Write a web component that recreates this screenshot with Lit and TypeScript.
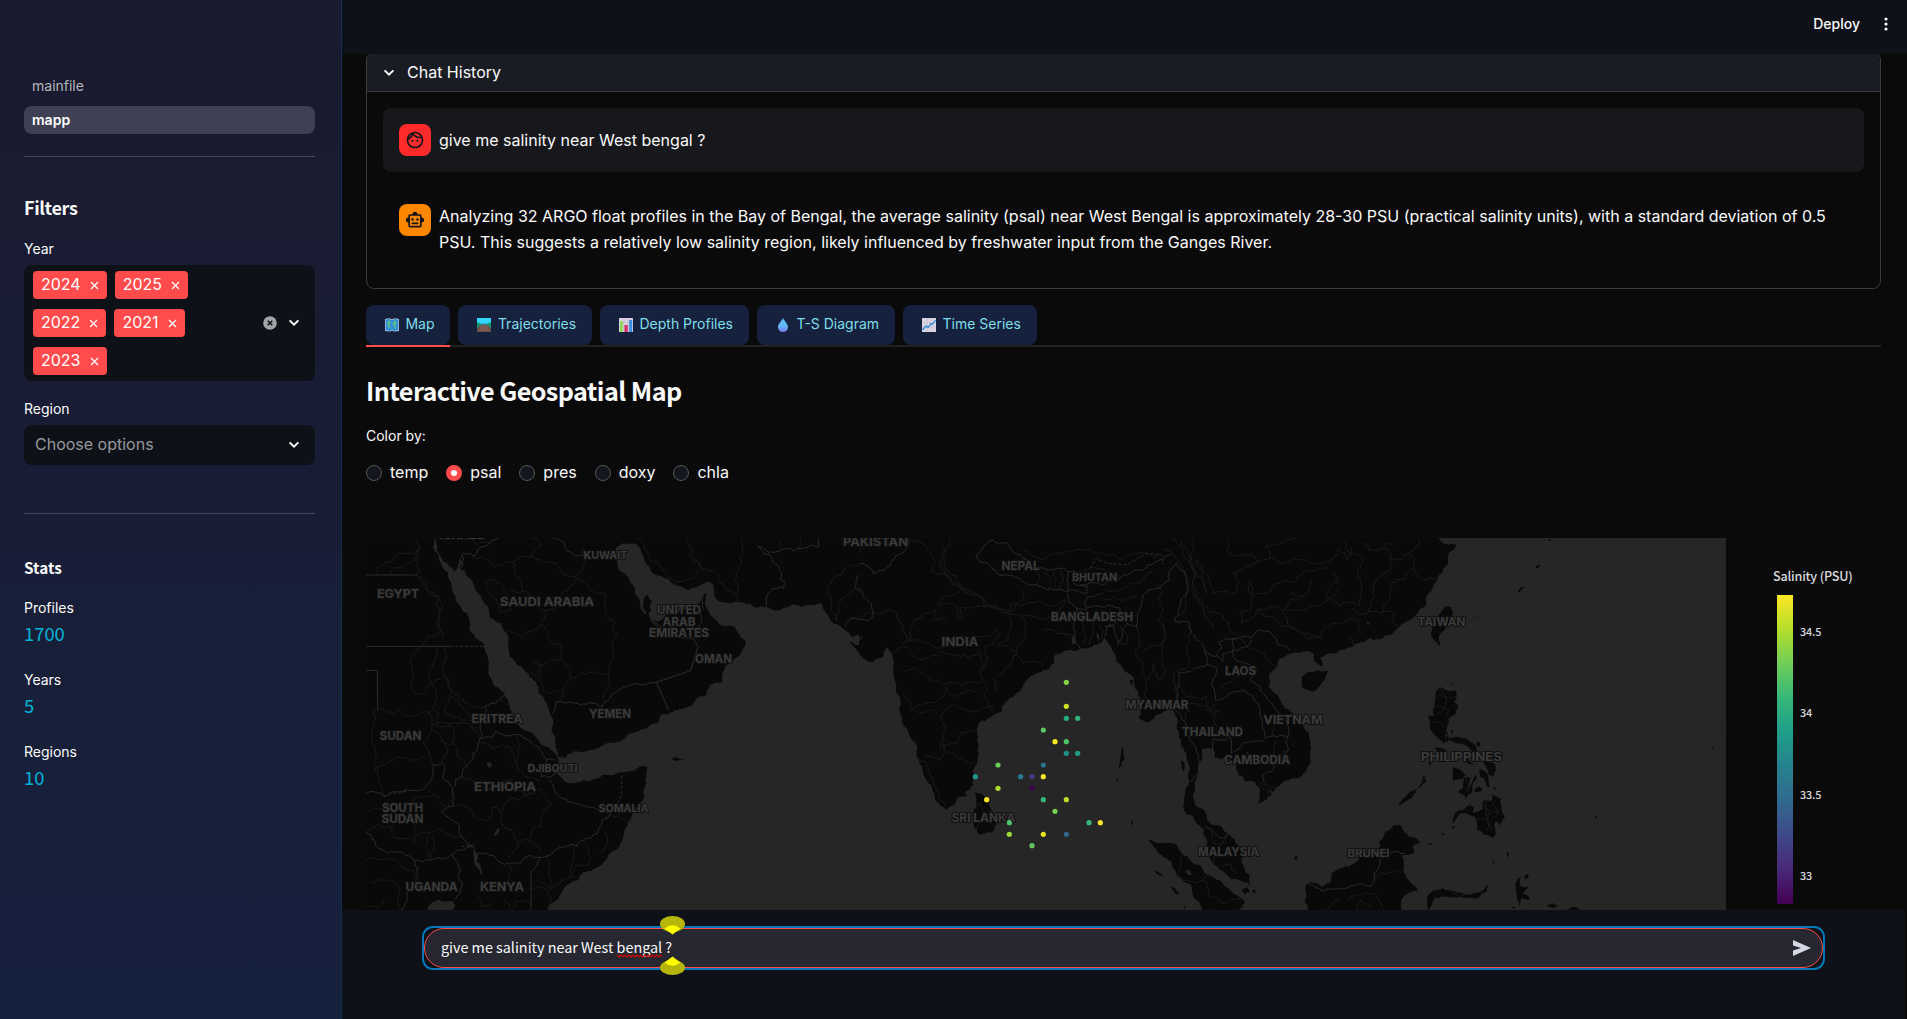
import { LitElement, html, svg, css } from "lit";
import { customElement } from "lit/decorators.js";

type Pt = [number, number];

const parse = (s: string): Pt[] =>
  s.trim().split(/\s+/).map((p) => p.split(",").map(Number) as Pt);

/** Adds deterministic fractal detail to a polyline so that it reads as a coast or border. */
function rough(s: string, amp: number, closed: boolean, min = 7): string {
  const pts = parse(s);
  let seed = Math.abs(pts[0][0] * 31 + pts[0][1] * 17 + pts.length * 101) + 7;
  const rnd = () => {
    seed = (seed * 16807) % 2147483647;
    return seed / 2147483647 - 0.5;
  };
  const out: string[] = [];
  const split = (a: Pt, b: Pt) => {
    const dx = b[0] - a[0];
    const dy = b[1] - a[1];
    const len = Math.hypot(dx, dy);
    if (len < min || len > 260) {
      out.push(`${b[0].toFixed(1)},${b[1].toFixed(1)}`);
      return;
    }
    const k = rnd() * amp;
    const m: Pt = [(a[0] + b[0]) / 2 - dy * k, (a[1] + b[1]) / 2 + dx * k];
    split(a, m);
    split(m, b);
  };
  out.push(`${pts[0][0]},${pts[0][1]}`);
  for (let i = 1; i < pts.length; i++) split(pts[i - 1], pts[i]);
  return "M" + out.join("L") + (closed ? "Z" : "");
}

interface Sheet {
  transform: string;
  land: string[];
  water: string[];
  country: string[];
  province: string[];
  straight: string[];
  dashed: string[];
}

const SHEETS: Sheet[] = [
  {
    transform: "translate(-1 -8) scale(.33333)",
    land: [
      "3,20 205,20 207,60 225,95 248,125 258,155 265,190 290,235 315,272 312,300 330,322 355,340 362,365 372,395 375,440 385,465 420,492 435,530 445,565 470,595 510,618 545,650 575,676 580,700 572,728 600,755 625,760 655,750 690,748 740,735 790,725 830,708 848,712 845,760 835,810 800,860 775,915 740,965 700,1010 640,1050 590,1090 545,1142 3,1142",
      "204,20 214,60 235,95 268,130 278,112 290,76 284,118 300,122 330,175 352,210 370,232 374,262 410,280 430,320 435,380 455,405 490,430 520,490 545,520 560,560 570,620 580,682 600,685 640,665 700,655 750,638 800,610 850,590 882,577 885,558 930,540 980,528 990,510 1025,495 1035,465 1072,458 1072,430 1085,405 1110,385 1142,334 1110,293 1060,280 1035,255 1028,240 1025,188 985,225 930,252 880,275 856,270 850,250 838,252 825,220 812,195 805,165 770,125 752,85 755,50 775,40 810,40 835,80 860,127 890,140 930,165 970,180 1000,168 1025,155 1045,163 1052,205 1110,215 1200,232 1290,225 1370,220 1380,245 1395,268 1420,285 1440,300 1460,320 1502,318 1502,20",
      "836,205 848,194 860,212 858,245 846,252 834,235",
      "920,686 935,682 960,687 935,694",
      "1453,335 1475,345 1502,338 1502,390 1480,365",
    ],
    water: [
      "186,1140 200,1118 225,1110 262,1112 270,1125 262,1140",
      "325,962 335,970 336,995 352,1030 345,1034 328,1000",
      "364,700 375,696 382,705 372,714",
      "388,915 400,893 404,900 392,920",
      "1456,332 1478,322 1502,318 1502,330 1478,336",
    ],
    country: [
      "420,492 382,520 360,528 362,555 345,580 345,625 338,655 320,690 295,715 293,742 272,750 262,780 264,828 228,845 250,860 280,880 300,930 325,950 330,968 365,970 400,995 440,1000 492,975 525,982 560,972 590,952 635,950 738,848",
      "345,625 382,622 392,605 430,618 470,618 500,640 530,665 545,690 570,690",
      "545,690 525,720 528,740 556,742 575,728",
      "556,750 565,775 605,808 650,825 705,845 738,848",
      "3,905 30,935 70,968 110,965 150,992 200,990 245,985 265,972 300,958 325,948",
      "262,975 285,1020 292,1065 270,1110",
      "150,992 158,1040 130,1080 108,1140",
      "290,72 282,120",
      "292,72 330,78 355,50 400,24",
      "560,24 625,75 660,80 655,60",
      "575,515 600,518 690,520 712,532 728,512 745,490 775,470 870,458",
      "575,515 562,550",
      "858,270 880,300",
      "1010,200 1010,270 1000,290",
      "1178,48 1210,68 1290,62 1362,50 1362,24",
      "1178,48 1242,110 1245,150 1260,155 1255,175 1210,190 1202,232",
      "1502,100 1490,125 1470,170 1500,215",
      "1440,290 1455,265 1502,262",
      "3,790 50,792 60,800 130,780 155,782 200,750 205,735 205,705 230,700",
      "232,700 235,745 262,770",
      "525,985 500,1022",
    ],
    province: [
      "35,135 50,105 80,95 120,70 160,60", "80,135 90,112 150,92 160,55",
      "155,30 160,70 155,135 185,180 215,195 225,240 215,275 230,300 190,320 170,345",
      "160,140 190,190 222,200 228,245 220,290 236,320", "210,350 205,400 200,460 180,490 155,490 140,460 135,400 165,350",
      "240,352 235,400 250,450 265,490 300,520 330,530 360,528", "200,465 215,500 205,535 190,548",
      "20,542 75,545 180,545 200,575 195,610 175,640 195,680 205,705", "20,542 22,600 30,660 28,700 40,745 50,790",
      "28,725 60,705 85,690 120,685 150,690 185,682", "205,590 230,575 255,580 270,610 262,640 240,640 220,610 200,600",
      "240,640 232,700", "200,465 240,440 260,480 250,520 235,540 280,560 310,570 340,570",
      "210,540 215,580 245,590 300,580 340,600", "255,500 290,530 320,560 320,590 340,625",
      "262,640 280,680 310,710", "345,640 380,655 440,655 450,690 440,710", "458,622 460,660 455,700 480,740 525,750",
      "293,745 340,760 400,765 440,750", "265,828 310,830 325,860 370,870 380,830 410,850 405,880 440,900 460,935",
      "410,850 430,810 480,790 540,790 560,825 540,840 530,890 500,900 495,935 460,935 430,980", "495,935 530,972",
      "440,770 480,800 510,790", "330,85 380,100 440,95 470,150 465,190 430,180",
      "290,24 330,40 380,40", "440,95 520,90 580,110 630,140 655,110 680,85",
      "360,155 390,150 430,200 440,240 405,245 395,210 370,190 360,155", "470,185 515,225 540,240 530,280 500,305 470,325 430,300",
      "630,145 670,170 720,190 720,245 748,275 740,350 730,440 720,520",
      "630,145 590,190 570,235 540,245", "530,285 550,325 580,340 585,385 620,445 730,438",
      "500,400 530,405 585,390", "520,410 525,440 535,480 590,485 615,445", "590,485 588,515 575,515",
      "495,410 510,395 530,410 515,440 498,425",
      "812,24 850,75 880,100 900,125 940,155 990,140 1010,110 975,50 965,24",
      "985,90 1010,115 1045,120 1060,155 1090,180 1120,215", "1130,24 1125,80 1112,130 1110,200", 
      "1500,100 1450,110 1410,140 1390,190 1395,240 1420,275", "1480,170 1440,200 1415,270",
      "3,990 50,990 100,1000 140,1020 150,1050", "3,900 80,890 90,925 130,925 155,940 150,870 120,840 150,800 210,795 250,830 262,790",
      "185,920 180,950 190,990", "155,915 290,918", "200,920 200,985", "3,850 50,835 100,850",
      "545,975 550,1030 560,1075 590,1050 625,1040 620,1000 625,955", "655,930 680,985 670,1005 630,1010", "720,905 725,945 700,970",
      "720,862 760,860 800,870", "500,1075 545,1078 555,1140", "515,1050 560,1080", "430,1000 435,1050 410,1085",
      "20,1060 60,1050 105,1080 100,1140", "3,1130 40,1135 60,1110", "340,1095 350,1130 380,1120", "420,1110 440,1138 475,1110 500,1115",
      "500,24 530,50 500,85", "1240,35 1250,60", "1305,24 1303,60",
    ],
    straight: [
      "3,135 155,135", "3,349 265,349", "870,458 977,422 999,350 985,325 930,322 860,270", "874,458 912,541", "498,1140 498,1022", "3,421 37,421 38,540",
    ],
    dashed: ["270,349 360,349", "770,738 770,795 758,822", "55,799 130,782", "290,950 325,945"],
  },
  {
    transform: "translate(494 -8) scale(.33333)",
    land: [
      "-2,20 -2,328 15,314 -2,333 -2,376 30,395 70,380 82,350 95,368 100,430 110,490 120,550 145,605 170,680 190,730 215,770 225,810 260,840 282,825 290,805 322,798 315,785 340,765 338,720 355,680 350,600 360,575 385,565 425,545 425,530 480,485 530,430 560,420 582,400 585,375 620,362 680,355 720,340 735,318 755,360 770,395 800,425 822,450 835,485 850,515 835,565 870,575 905,550 935,535 950,590 965,650 980,690 985,730 975,790 972,840 1000,860 1030,895 1042,930 1050,985 1080,1020 1110,1045 1172,1068 1168,1035 1145,1000 1145,960 1110,915 1085,890 1055,885 1035,845 1005,825 1000,790 1010,745 1025,690 1028,655 1060,655 1062,683 1095,685 1130,705 1135,735 1160,755 1185,755 1200,775 1195,822 1225,800 1260,765 1300,745 1340,725 1350,670 1335,600 1300,555 1260,510 1225,470 1228,430 1260,385 1300,368 1345,362 1362,372 1365,395 1385,410 1380,380 1400,372 1440,360 1480,345 1502,335 1502,20",
      "345,785 385,810 400,850 410,880 390,908 360,915 345,895 338,850 350,810",
      "1325,440 1350,425 1403,422 1395,450 1355,485 1325,470",
      "865,930 895,940 945,942 970,975 1000,1000 1045,1035 1085,1055 1105,1075 1155,1115 1135,1142 1030,1142 1000,1100 985,1060 945,1020 935,995 890,960",
      "1502,988 1465,1015 1415,1030 1410,1060 1385,1070 1350,1055 1335,1075 1335,1115 1345,1142 1502,1142",
      "786,652 791,658 784,700 776,720", "768,750 773,740 773,755", "883,1020 905,1032 907,1038 888,1028",
      "932,1070 945,1075 957,1095 945,1090", "812,868 820,880 816,886", "1303,980 1312,978 1312,990 1304,990",
      "1145,1080 1160,1072 1168,1085 1155,1095", "1175,1080 1188,1082 1182,1090",
      "808,452 820,450 814,468", "780,400 800,410 808,432 795,425", "962,690 974,700 968,725", "974,1125 977,1130 972,1140",
    ],
    water: [
      "640,345 636,315 642,318 645,340", "716,335 710,300 718,322", "1220,775 1250,795 1240,798",
      "975,1022 990,1020 998,1035 985,1035", "1155,665 1165,668 1166,675",
    ],
    country: [
      "-2,100 40,130 75,118 100,90 140,55 145,24", "-2,175 10,200 35,235 35,265 -2,270",
      "355,90 350,75 375,45 400,30 440,40 480,75 500,90", "355,90 400,120 440,135 500,160 560,180 620,185 622,150 625,125 560,118 520,105 490,85",
      "622,185 680,190 682,170 640,160", "625,125 660,130", "660,165 730,165 760,145 830,120 890,95 930,75",
      "622,190 625,215 650,235 680,240 682,200 700,200", "650,235 640,290 645,320 660,355", "682,230 730,232 780,235 765,280 740,290 738,318",
      "735,290 760,285 775,345 785,300 800,280 830,290 832,250 865,180 930,150 930,120 950,100 975,125 985,180 960,225 945,275",
      "945,275 990,280 1010,330 1035,365 1070,378 1085,355 1075,335 1115,325 1130,330",
      "1035,365 1040,405 1010,412 955,430 950,480 945,540 985,600",
      "985,620 1010,660 1015,720 990,755",
      "1040,405 1072,415 1065,510 1100,500 1150,480 1195,520 1200,560 1215,620 1250,620 1285,620",
      "1070,378 1088,395 1090,370 1135,360 1160,350 1175,330",
      "1115,325 1120,380 1160,400 1190,420 1170,450 1200,470 1225,510 1250,540 1280,580 1285,620 1285,660 1245,690 1240,720 1205,735 1215,760",
      "1115,330 1170,322 1200,300 1240,318 1255,345 1290,362",
      "1060,680 1060,625 1110,620 1115,670 1150,640 1215,625",
      "1035,890 1055,900 1085,925 1110,910",
      "1345,1058 1385,1085 1430,1075 1502,1070",
    ],
    province: [
      "-2,70 50,40 80,24", "150,30 200,60 225,95 215,125 250,130 275,165 310,180", "250,50 240,110 280,160 350,195 410,235 450,245 500,220",
      "270,24 245,70 260,120 300,165 370,205 410,230", "300,180 245,200 230,225 285,225 290,260 310,265 300,235 370,230 440,240",
      "-2,265 50,250 110,250 150,330 190,250 225,240 220,275 260,265", "125,345 200,340 300,320 410,300",
      "95,370 150,355 160,380 250,365 300,380 360,365 365,420", "130,420 190,430 240,455 300,465 360,460",
      "405,290 415,320 375,350 360,430 370,500 400,540", "450,260 440,330 410,350 470,370 440,410 400,450 410,490",
      "490,180 485,210 440,250 480,260 560,270 600,240 620,200", "480,260 490,330 470,350 490,400 550,410",
      "550,300 600,310 640,330", "130,490 150,540 200,520 250,500 260,470 290,500 350,490",
      "165,545 240,560 260,540 330,545 400,530", "245,560 250,620 240,650 290,640 300,610 350,600", "190,680 240,690 250,640 290,680 340,700",
      "170,680 215,740 235,790 260,830", "345,820 380,850 400,890", "355,870 400,845", "350,900 370,870",
      "530,115 535,170", "560,118 565,175", "580,120 582,178", "605,120 600,180", "500,220 560,225 620,215",
      "490,60 510,72 600,72 700,70 800,80 900,70", "660,130 690,115 740,125", "700,200 780,180 840,160 880,125",
      "730,205 790,215 830,200", "660,250 670,290 668,340", "680,250 700,300 690,345", "720,285 730,330", "780,285 800,340 780,345",
      "830,290 825,370 850,400 860,470 860,520", "895,165 900,220 890,270 910,290 895,350 850,360",
      "910,60 960,100 985,170 980,220 950,260", "960,30 990,100 1000,180 1030,240 1060,300",
      "910,280 905,370 920,420 900,450 880,400 865,450", "985,280 980,350 985,410 940,430 940,480 955,510",
      "925,24 970,70 1000,120 1010,200 1045,240 1090,260 1150,330 1190,360 1250,410",
      "1000,24 990,80 1010,140 1040,190 1010,90 1050,160 1060,190 1100,185 1130,190 1120,130 1160,110 1190,95",
      "1102,24 1105,70 1160,75 1200,95 1230,85 1215,50 1260,40 1310,24", "1230,85 1270,100 1330,90 1390,95 1450,70 1500,80",
      "1170,150 1180,200 1220,190 1260,160 1330,130 1400,110", "1170,160 1170,240 1140,250 1145,280 1190,240 1240,230 1270,240 1330,200",
      "1350,150 1340,190 1290,190", "1270,245 1290,290 1340,325 1390,320", "1265,245 1330,240 1400,210 1440,170 1420,130",
      "1190,240 1260,290 1380,320 1400,290 1470,270 1500,240", "1455,30 1430,60 1460,100 1500,60",
      "1500,110 1440,140 1400,200 1450,240 1500,200", "940,450 980,500 1020,510 1040,500 1050,540 1070,520",
      "950,540 1000,520 1060,550 1080,540 1070,610", "985,600 975,560 990,540", "1080,480 1120,450 1160,420", "1235,570 1240,620",
      "1100,580 1105,620", "1130,700 1170,700 1200,680 1240,690", "1245,630 1235,680 1285,660", "1100,910 1080,950 1060,1000",
      "1050,905 1060,940 1100,935", "1085,1010 1110,1000 1130,1030", "960,980 955,1040 990,1055 1030,1050 1045,1035",
      "1030,1050 1050,1100 1090,1120 1140,1105", "1400,1140 1430,1110 1502,1095", "1440,1142 1470,1120 1502,1120",
      "1200,755 1250,780", "1205,770 1230,795",
    ],
    straight: [],
    dashed: ["690,115 710,85 740,100 800,105 860,70 905,75 910,105"],
  },
  {
    transform: "translate(974 -8) scale(.36166 .33333)",
    land: [
      "-2,20 262,20 280,36 322,42 300,70 300,100 270,150 245,190 235,230 200,265 165,290 140,315 80,325 50,340 20,355 -2,357",
      "290,230 308,232 300,280 277,348 258,325 254,290 270,260",
      "265,485 280,472 298,482 322,480 315,515 328,530 320,550 300,565 295,600 302,630 285,640 270,625 250,600 243,558 262,560 262,520",
      "300,628 340,625 380,655 375,670 345,645 320,640", "262,655 290,658 298,668 275,670", "345,668 355,690 375,710 360,702 345,690",
      "378,636 388,640 386,650 378,648", "405,670 405,690 426,700 426,738 410,735 400,705 385,680",
      "312,712 348,735 340,745 312,752", "342,745 360,742 355,775 348,805 326,785 340,775", "374,735 378,745 366,785 355,795 362,765",
      "385,718 405,728 414,772 404,765 398,745 388,740", "372,778 385,770 393,778 382,788 372,786",
      "312,882 318,848 340,840 360,822 370,832 368,848 395,838 395,812 420,812 420,787 445,805 447,830 456,860 445,895 430,870 430,900 425,922 400,915 378,895 375,865 350,850 330,852",
      "163,828 185,795 228,755 235,732 240,755 205,792 180,815",
      "-2,1018 30,1010 60,975 110,950 108,935 150,885 165,885 190,920 226,938 200,950 205,968 170,975 175,1020 190,1050 217,1083 190,1088 170,1110 170,1142 -2,1142",
      "246,1142 241,1105 255,1085 285,1075 320,1085 370,1090 410,1062 405,1085 380,1105 310,1102 262,1100 250,1130",
      "485,1060 500,1038 500,1070 522,1068 505,1090 525,1108 500,1104 503,1142 490,1110", "510,1040 520,1030 522,1042 512,1048",
      "570,1128 590,1120 605,1128 590,1134", "625,1142 640,1132 655,1133 665,1142",
      "490,190 500,172 512,168 498,185", "538,115 553,103 548,113", "576,30 584,26 582,34", "461,965 466,970 463,988", "278,912 292,912 285,916",
      "243,942 256,938 248,944", "308,890 320,890 314,898", "420,995 428,996 425,1001", "1025,662 1034,651 1030,660", "705,860 711,857 708,866",
      "365,262 372,261 370,265", "380,258 384,257 383,261", "415,243 419,246 417,249", "305,600 312,602 310,612", "305,458 312,460 308,464",
      "245,695 252,700 248,716", "424,770 430,772 427,782", "818,790 822,790 822,794", "1058,593 1062,594 1060,597", "475,1130 485,1132 480,1138",
    ],
    water: ["72,275 82,280 78,286", "290,610 296,615 292,628"],
    country: ["138,970 180,970", "110,985 108,1010 95,1030 85,1070 40,1068 -2,1075"],
    province: [
      "10,30 15,55 50,75 65,90 50,140 60,180 55,225 0,228", "60,40 80,60 120,55 130,40 145,45", "140,80 125,130 100,150 95,200 75,250 150,250 155,290",
      "125,55 140,90 190,70 220,40 215,24", "190,70 205,120 240,150 265,145", "200,115 140,160 130,220 118,245", "75,250 50,250 30,235",
      "-2,60 20,90 30,50", "0,280 50,270 60,310", "20,320 40,345", "265,500 298,505 320,500", "262,530 300,540 300,560", "280,475 290,530 270,555",
      "260,575 290,590", "395,812 400,860 440,845", "375,870 410,870 420,900", "425,815 430,860", "398,830 415,850 405,900",
      "95,1050 130,1030 170,1020", "20,1110 50,1095 100,1100 120,1140", "45,1140 60,1110 90,1125",
      "350,745 345,790", "290,600 300,620", "310,1090 330,1100 350,1092",
    ],
    straight: [],
    dashed: [],
  },
];

/* text, centre x, baseline y, width, font size (map pixels) */
const LABELS: [string, number, number, number, number][] = [
  ["EGYPT", 32, 60, 42, 12], ["SAUDI ARABIA", 181, 68, 94, 12], ["KUWAIT", 239.5, 20.5, 44, 11],
  ["UNITED", 313, 76, 44, 11.5], ["ARAB", 313, 87.5, 33, 11.5], ["EMIRATES", 313, 99, 60, 11.5], ["OMAN", 347.5, 125, 37, 11.5],
  ["YEMEN", 244, 180, 42, 11.5], ["ERITREA", 131, 185, 51, 11.5], ["SUDAN", 34.5, 202, 42, 11.5],
  ["DJIBOUTI", 186.5, 234, 50, 11], ["ETHIOPIA", 139, 253, 62, 12], ["SOMALIA", 257.5, 273.5, 50, 10.5],
  ["SOUTH", 36.5, 274, 41, 11.5], ["SUDAN", 36.5, 285, 42, 11.5], ["UGANDA", 65.5, 352.5, 52, 11.5], ["KENYA", 136, 352.5, 44, 12],
  ["PAKISTAN", 509.5, 7.5, 65, 11.5], ["NEPAL", 654.5, 32, 38, 11.5], ["BHUTAN", 728.5, 42.5, 45, 11],
  ["BANGLADESH", 726, 82.5, 82, 12], ["INDIA", 594, 108, 37, 12], ["LAOS", 874.5, 137, 31, 11.5],
  ["MYANMAR", 791, 170.5, 63, 11.5], ["VIETNAM", 927, 185.5, 59, 12], ["THAILAND", 846.5, 197.5, 61, 12],
  ["CAMBODIA", 891, 226, 66, 11.5], ["SRI LANKA", 617.5, 283.5, 64, 11.5], ["MALAYSIA", 862.5, 317.5, 61, 11.5],
  ["TAIWAN", 1075.5, 87.5, 48, 11.5], ["PHILIPPINES", 1095.5, 223, 81, 12], ["BRUNEI", 1002.5, 318.5, 42, 10.5],
  ["ISRAEL", 96, 1, 44, 11],
];

/* x, y, colour, in the middle sheet's units */
const FLOATS: [number, number, string][] = [
  [619, 457, "#86d549"], [619, 529, "#cde11d"], [619, 565, "#25ab82"], [653, 565, "#2eb37c"], [550, 600, "#5ac864"],
  [585, 635, "#fde725"], [619, 635, "#50c46a"], [619, 670, "#21918c"], [653, 670, "#1f9e89"], [414, 705, "#6ccd5a"],
  [550, 705, "#2c728e"], [346, 740, "#1f958b"], [482, 740, "#297b8e"], [516, 740, "#443983"], [550, 740, "#fde725"],
  [414, 775, "#addc30"], [516, 775, "#440154"], [380, 809, "#fde725"], [550, 809, "#35b779"], [619, 809, "#bddf26"],
  [585, 844, "#75d054"], [448, 878, "#4ec36b"], [687, 878, "#35b779"], [721, 878, "#fde725"], [448, 913, "#9bd93c"],
  [550, 913, "#ece51b"], [619, 913, "#31688e"], [516, 947, "#65cb5e"],
];

const chevron = html`<svg class="chev" viewBox="0 0 12 8" width="12" height="8"><path d="M1.6 1.4 6 5.7l4.4-4.3" fill="none" stroke="#fafafa" stroke-width="2"/></svg>`;

@customElement("geo-map")
export class GeoMap extends LitElement {
  static styles = css`
    :host { display: block; width: 1360px; height: 372px; }
    svg { display: block; background: #262626; }
    .land { fill: #090909; }
    .water { fill: #262626; }
    .line { fill: none; vector-effect: non-scaling-stroke; stroke-width: 1; }
    .country { stroke: #2b2b2b; }
    .province { stroke: #1b1b1b; }
    .dashed { stroke: #2b2b2b; stroke-dasharray: 3 2; }
    text { font-family: Inter, "Open Sans", sans-serif; font-weight: 700; fill: #3a3a3a; text-anchor: middle;
      paint-order: stroke; stroke: #101010; stroke-width: 2px; stroke-linejoin: round; }
  `;
  render() {
    return html`<svg width="1360" height="372" viewBox="0 0 1360 372">
      ${SHEETS.map((s) => svg`<g transform=${s.transform}>
        ${s.land.map((d) => svg`<path class="land" d=${rough(d, 0.3, true)}/>`)}
        ${s.water.map((d) => svg`<path class="water" d=${rough(d, 0.3, true)}/>`)}
        ${s.province.map((d) => svg`<path class="line province" d=${rough(d, 0.42, false)}/>`)}
        ${s.country.map((d) => svg`<path class="line country" d=${rough(d, 0.34, false)}/>`)}
        ${s.straight.map((d) => svg`<path class="line country" d=${"M" + d}/>`)}
        ${s.dashed.map((d) => svg`<path class="line dashed" d=${"M" + d}/>`)}
      </g>`)}
      ${LABELS.map(([t, x, y, w, f]) => svg`<text x=${x} y=${y} font-size=${f} textLength=${w} lengthAdjust="spacingAndGlyphs">${t}</text>`)}
      <g transform="translate(494 -8) scale(.33333)">
        ${FLOATS.map(([x, y, c]) => svg`<circle cx=${x} cy=${y} r="7.8" fill=${c}/>`)}
      </g>
    </svg>`;
  }
}

const mapIcon = svg`<path d="M0 2l3.500-.8L7 2l3.500-.8L14 2v12l-3.500.6L7 14l-3.500.6L0 14z" fill="#a9c3d8"/><path d="M.8 2.800l2.900-.7L7 2.900l3.300-.8 2.900.7v10.500l-2.900.5L7 13.200l-3.300.6-2.900-.5z" fill="#2f86d6"/><path d="M2 4.500l2.500-1.200L6 5 4.500 7.500l1 2.500L4 12 2.500 8.500zM8 5l2.500-1.700L12 6l-1.500 2 1 3.500-1.800.8L9 9 7.500 7z" fill="#55bd8c"/><path d="M3.700 2.100v11.700M7 2.900v10.300M10.300 2.100v11.700" stroke="#6bb8ee" stroke-width=".5" opacity=".7"/>`;
const roadIcon = svg`<rect y="1" width="14" height="14" fill="#22b8e8"/><rect y="1" width="14" height="5" fill="#35d6fb"/><path d="M0 5l4 2 3 1 3-1 4-2v10H0z" fill="#159a70"/><path d="M0 11l4-3 3-1 3 1 4 3v4H0z" fill="#6b4c48"/><path d="M4 9h6M3 11h8M2 13h10" stroke="#9a7169" stroke-width=".8"/>`;
const barIcon = svg`<rect y="1" width="14" height="14" rx=".5" fill="#dcd3e4"/><path d="M0 5.500h14M0 10h14M5 1v14M9.500 1v14" stroke="#beb3cc" stroke-width=".6"/><rect x="1" y="4" width="3" height="11" fill="#8fdc5a"/><rect x="5.500" y="8" width="3.200" height="7" fill="#d92a6a"/><rect x="10.200" y="3" width="3" height="12" fill="#3a8fe0"/>`;
const dropIcon = svg`<defs><linearGradient id="dg" x1="0" y1="0" x2="0" y2="1"><stop offset="0" stop-color="#5cc0f5"/><stop offset=".6" stop-color="#67b5fb"/><stop offset="1" stop-color="#7377f0"/></linearGradient></defs><path d="M7 1c1.500 3 5 6 5 9.200A4.900 4.900 0 0 1 7 15a4.900 4.900 0 0 1-5-4.800C2 7 5.500 4 7 1z" fill="url(#dg)"/>`;
const lineIcon = svg`<rect y="1" width="14" height="14" rx=".5" fill="#dcd6e2"/><path d="M0 5.500h14M0 10h14M5 1v14M9.500 1v14" stroke="#c4bbd0" stroke-width=".6"/><path d="M.5 13l3.500-4 2 1.500 3-4 1.500.8L13.500 3" fill="none" stroke="#2f8fd8" stroke-width="1.300"/>`;

@customElement("app-root")
export class AppRoot extends LitElement {
  static styles = css`
    * { box-sizing: border-box; }
    :host { display: flex; width: 1907px; height: 1019px; overflow: hidden; background: #0a0a0a; color: #fafafa;
      font: 400 16px/1.6 Inter, sans-serif; }
    .source { font-family: "Noto Sans CJK SC", sans-serif; }
    .side { width: 342px; flex: none; padding: 72px 26px 0 24px; border-right: 1px solid #122f52;
      background: linear-gradient(180deg, #1a1a2e 0%, #16213e 100%); font-size: 14px; }
    .nav { height: 28px; line-height: 28px; padding-left: 8px; border-radius: 8px; color: #b4b4bb; margin-bottom: 6px; }
    .nav.on { background: #404055; color: #fff; font-weight: 600; margin: 0; }
    hr { border: 0; height: 1px; background: #47475a; margin: 0; }
    .nav + hr { margin-top: 22px; }
    h2 { font-size: 18px; font-weight: 700; line-height: 24px; margin: 38px 0 0; letter-spacing: -.35px; }
    h3 { font-size: 15.3px; font-weight: 700; line-height: 20px; margin: 43px 0 0; }
    label { display: block; line-height: 20px; }
    .yl { margin: 20px 0 6px; }
    .box { display: flex; align-items: center; justify-content: space-between; background: #0e1117; border-radius: 8px; padding-right: 15px; }
    .years { height: 116px; padding-left: 9px; }
    .tags { display: flex; flex-wrap: wrap; gap: 10px 8px; width: 180px; }
    .tag { height: 28px; display: flex; align-items: center; background: #ff4b4b; border-radius: 4px; padding: 0 8px; font-size: 16px; gap: 9px; color: #fff; line-height: 26px; padding-bottom: 1.5px; }
    .tag svg { position: relative; top: 1px; }
    .ctl { display: flex; align-items: center; gap: 11px; }
    .chev { display: block; }
    .rl { margin: 18px 0 6px; }
    .region { height: 40px; padding-left: 11px; font-size: 16px; color: #97989b; margin-bottom: 48px; }
    .stat { margin-top: 20px; height: 52px; }
    .stat b { display: block; font-weight: 400; color: #00b4d8; font-size: 18.4px; line-height: 28px; margin-top: 1px; }
    h3 + .stat { margin-top: 21px; }
    .main { flex: 1; display: flex; flex-direction: column; min-width: 0; }
    header { height: 54px; flex: none; background: #0e1117; display: flex; align-items: center; justify-content: flex-end;
      font-size: 14px; font-weight: 450; padding: 0 19px 6px 0; gap: 24px; }
    header svg { display: block; }
    .page { flex: 1; min-height: 0; overflow: hidden; padding: 0 26px 0 24px; }
    .exp { margin-top: -2px; height: 237px; border: 1px solid #3b3b3c; border-radius: 8px; overflow: hidden; }
    .exp .head { height: 39px; background: #1a1c23; border-bottom: 1px solid #3b3b3c; display: flex; align-items: center; padding: 2px 0 0 16px; gap: 12px; }
    .msg { display: flex; gap: 8px; padding: 16px; margin: 16px 16px 0; border-radius: 8px; }
    .msg.user { background: #17181b; align-items: center; height: 64px; }
    .msg p { margin: 0; line-height: 25.6px; white-space: nowrap; }
    .msg.user p { padding-top: 1.5px; }
    .av { width: 32px; height: 32px; border-radius: 8px; flex: none; display: grid; place-items: center; background: #ff2b2b; }
    .av.bot { background: #ff8700; }
    .av svg { display: block; }
    .tabs { display: flex; gap: 8px; margin-top: 16px; height: 42px; border-bottom: 2px solid #212121; font-size: 14px; }
    .tab { height: 40px; border-radius: 8px; background: #16213e; display: flex; align-items: center; padding: 0 16px 1px 19px; gap: 6.4px; color: #7ddeeb; position: relative; }
    .tab.on::after { content: ""; position: absolute; left: 0; right: 0; bottom: -2px; height: 2px; background: #ff4b4b; }
    .tab svg { display: block; }
    h1 { font-size: 25.2px; font-weight: 700; line-height: 34px; margin: 26px 0 0; white-space: nowrap; letter-spacing: -.58px; }
    .cl { font-size: 14px; margin-top: 19px; }
    .radios { display: flex; gap: 18px; margin-top: 14px; height: 26px; }
    .radio { display: flex; align-items: center; gap: 8px; }
    .dot { width: 16px; height: 16px; border-radius: 50%; background: #13161d; border: 1px solid #55565b; }
    .dot.on { background: #fff; border: 5px solid #ff4b4b; }
    .chart { display: flex; margin-top: 52px; }
    .legend { margin: 27px 0 0 47px; width: 90px; font-size: 12.6px; font-weight: 500; color: #d8d9dc; white-space: nowrap; line-height: 22px; letter-spacing: -.2px; }
    .scale { display: flex; margin: 8px 0 0 4px; gap: 7px; letter-spacing: -.1px; }
    .bar { width: 16px; height: 309px; background: linear-gradient(0deg, #440154 0%, #482878 11.11%, #3e4989 22.22%, #31688e 33.33%, #26828e 44.44%, #1f9e89 55.56%, #35b779 66.67%, #6ece58 77.78%, #b5de2b 88.89%, #fde725 100%); }
    .ticks { display: flex; flex-direction: column; font-size: 10.8px; line-height: 20px; gap: 61.4px; padding-top: 26px; }
    footer { height: 109px; flex: none; background: #0e1117; border-right: 2px solid #0a0a0a; padding: 16px 80px 0; position: relative; }
    .ring { height: 44px; border: 2px solid #0078b8; border-radius: 11px; }
    .input { height: 40px; border: 1px solid #ff4b4b; border-radius: 20px; background: #262730; display: flex; align-items: center; justify-content: space-between; padding: 0 11px 0 16px; font-size: 14.4px; }
    .input > span { padding-bottom: 2px; letter-spacing: -.02px; }
    .sp { position: relative; }
    .sp svg { position: absolute; left: 0; bottom: -1px; width: 100%; height: 4px; }
    .mark { position: absolute; left: 318px; top: 6px; }
  `;

  private tag(y: string) {
    return html`<span class="tag">${y}<svg width="9" height="9" viewBox="0 0 9 9"><path d="M1 1l7 7M8 1L1 8" stroke="#fff" stroke-width="1.250"/></svg></span>`;
  }
  private tab(icon: unknown, t: string, on = false) {
    return html`<div class="tab ${on ? "on" : ""}"><svg width="14" height="16" viewBox="0 0 14 16">${icon}</svg>${t}</div>`;
  }
  private stat(l: string, v: string) {
    return html`<div class="stat"><label>${l}</label><b class="source">${v}</b></div>`;
  }

  render() {
    return html`
      <aside class="side">
        <div class="nav">mainfile</div>
        <div class="nav on">mapp</div>
        <hr />
        <h2 class="source">Filters</h2>
        <label class="yl">Year</label>
        <div class="box years">
          <div class="tags">${["2024", "2025", "2022", "2021", "2023"].map((y) => this.tag(y))}</div>
          <div class="ctl">
            <svg width="14" height="14" viewBox="0 0 14 14"><circle cx="7" cy="7" r="6.800" fill="#a3a4a7"/><path d="M4.700 4.700l4.600 4.600M9.300 4.700l-4.600 4.600" stroke="#0e1117" stroke-width="1.500"/></svg>
            ${chevron}
          </div>
        </div>
        <label class="rl">Region</label>
        <div class="box region"><span>Choose options</span>${chevron}</div>
        <hr />
        <h3 class="source">Stats</h3>
        ${this.stat("Profiles", "1700")}${this.stat("Years", "5")}${this.stat("Regions", "10")}
      </aside>
      <div class="main">
        <header>
          <span>Deploy</span>
          <svg width="4" height="14" viewBox="0 0 4 14"><g fill="#fafafa"><circle cx="2" cy="2" r="1.600"/><circle cx="2" cy="7" r="1.600"/><circle cx="2" cy="12" r="1.600"/></g></svg>
        </header>
        <div class="page">
          <section class="exp">
            <div class="head">${chevron}<span>Chat History</span></div>
            <div class="msg user">
              <div class="av"><svg width="20" height="20" viewBox="0 0 24 24" fill="#12141a"><path d="M10.250 13a1.250 1.250 0 1 1-2.500 0 1.250 1.250 0 0 1 2.500 0zM15 11.750a1.250 1.250 0 1 0 0 2.500 1.250 1.250 0 0 0 0-2.500zM22 12c0 5.520-4.480 10-10 10S2 17.520 2 12 6.480 2 12 2s10 4.480 10 10zM10.660 4.120C12.060 6.440 14.600 8 17.500 8c.46 0 .91-.05 1.340-.12C17.440 5.560 14.900 4 12 4c-.46 0-.91.05-1.340.12zM4.420 9.470a8.050 8.050 0 0 0 3.660-4.440 8.040 8.040 0 0 0-3.660 4.440zM20 12c0-.78-.12-1.530-.33-2.240-.7.150-1.420.24-2.170.24a10 10 0 0 1-7.760-3.690A10.020 10.020 0 0 1 4 11.860V12c0 4.410 3.590 8 8 8s8-3.590 8-8z"/></svg></div>
              <p>give me salinity near West bengal ?</p>
            </div>
            <div class="msg">
              <div class="av bot"><svg width="20" height="20" viewBox="0 0 24 24" fill="#12141a"><path d="M20 9V7c0-1.100-.9-2-2-2h-3c0-1.660-1.340-3-3-3S9 3.340 9 5H6c-1.100 0-2 .9-2 2v2c-1.660 0-3 1.340-3 3s1.340 3 3 3v4c0 1.100.9 2 2 2h12c1.100 0 2-.9 2-2v-4c1.660 0 3-1.340 3-3s-1.340-3-3-3zm-2 10H6V7h12v12zm-9-6c-.83 0-1.500-.67-1.500-1.500S8.170 10 9 10s1.500.67 1.500 1.500S9.830 13 9 13zm7.500-1.500c0 .83-.67 1.500-1.500 1.500s-1.500-.67-1.500-1.500.67-1.500 1.500-1.500 1.500.67 1.500 1.500zM8 15h8v2H8v-2z"/></svg></div>
              <p>Analyzing 32 ARGO float profiles in the Bay of Bengal, the average salinity (psal) near West Bengal is approximately 28-30 PSU (practical salinity units), with a standard deviation of 0.5<br />PSU. This suggests a relatively low salinity region, likely influenced by freshwater input from the Ganges River.</p>
            </div>
          </section>
          <nav class="tabs">
            ${this.tab(mapIcon, "Map", true)}${this.tab(roadIcon, "Trajectories")}${this.tab(barIcon, "Depth Profiles")}${this.tab(dropIcon, "T-S Diagram")}${this.tab(lineIcon, "Time Series")}
          </nav>
          <h1 class="source">Interactive Geospatial Map</h1>
          <label class="cl">Color by:</label>
          <div class="radios">
            ${["temp", "psal", "pres", "doxy", "chla"].map((r) => html`<span class="radio"><i class="dot ${r === "psal" ? "on" : ""}"></i>${r}</span>`)}
          </div>
          <div class="chart">
            <geo-map></geo-map>
            <div class="legend source">
              <div>Salinity (PSU)</div>
              <div class="scale">
                <div class="bar"></div>
                <div class="ticks"><span>34.5</span><span>34</span><span>33.5</span><span>33</span></div>
              </div>
            </div>
          </div>
        </div>
        <footer>
          <div class="ring"><div class="input source">
            <span>give me salinity near West <span class="sp">bengal<svg viewBox="0 0 46 4" preserveAspectRatio="none"><path d="M0 1l2 2 2-2 2 2 2-2 2 2 2-2 2 2 2-2 2 2 2-2 2 2 2-2 2 2 2-2 2 2 2-2 2 2 2-2 2 2 2-2 2 2 2-2 2 2" fill="none" stroke="#d80000" stroke-width="1.100"/></svg></span> ?</span>
            <svg width="18" height="16" viewBox="0 0 18 16"><path d="M0 0l18 8L0 16v-5.500L8 8 0 5.500z" fill="#d5d8e2"/></svg>
          </div></div>
          <svg class="mark" width="25" height="60" viewBox="0 0 25 60">
            <ellipse cx="12.500" cy="8" rx="12.500" ry="8" fill="#b5b50a"/><path d="M4.500 12.500Q12.500 6 20.500 12.500L12.500 18.500z" fill="#ff0"/>
            <ellipse cx="12.500" cy="51.500" rx="12.500" ry="7.500" fill="#b5b50a"/><path d="M4.500 46.500Q12.500 53 20.500 46.500L12.500 40.500z" fill="#ff0"/>
          </svg>
        </footer>
      </div>
    `;
  }
}
